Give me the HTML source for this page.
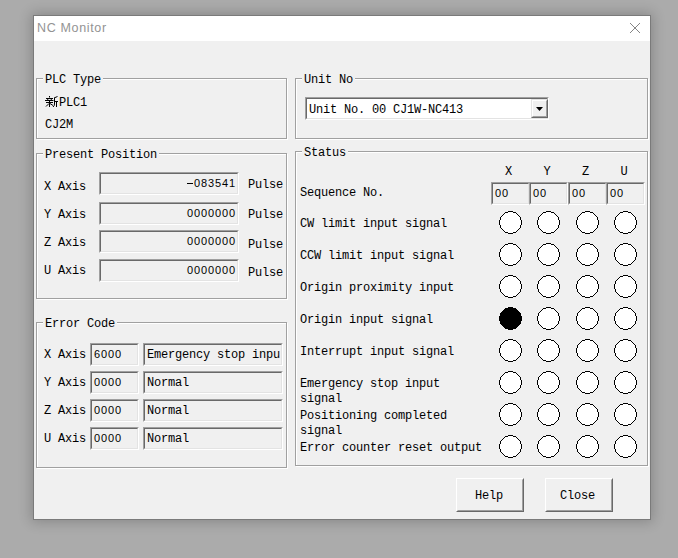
<!DOCTYPE html>
<html><head><meta charset="utf-8">
<style>
html,body{margin:0;padding:0;}
body{width:678px;height:558px;background:#ababab;position:relative;overflow:hidden;font-family:"Liberation Mono",monospace;font-size:12px;letter-spacing:-0.2px;color:#000;}
.abs{position:absolute;}
#win{position:absolute;left:33px;top:15px;width:616px;height:503px;border:1px solid #7a7a7a;background:#f0f0f0;box-shadow:0 0 12px 2px rgba(0,0,0,0.2);}
#title{position:absolute;left:34px;top:16px;width:616px;height:25px;background:#fff;}
.tt{position:absolute;font-family:"Liberation Sans",sans-serif;font-size:12.5px;letter-spacing:0.65px;color:#939393;white-space:nowrap;}
.grp{position:absolute;border:1px solid #a0a0a0;box-shadow:1px 1px 0 #fff, inset 1px 1px 0 #fff;}
.t{position:absolute;white-space:nowrap;line-height:13px;height:13px;}
.gl{position:absolute;white-space:nowrap;line-height:13px;height:13px;background:#f0f0f0;padding:0 2px;}
.ed{position:absolute;box-sizing:border-box;}
.ed{border-style:solid;border-width:1px;border-color:#a0a0a0 #fff #fff #a0a0a0;}
.ed i{position:absolute;left:0;top:0;right:0;bottom:0;border-style:solid;border-width:1px;border-color:#696969 #e3e3e3 #e3e3e3 #696969;}
.d{font-family:'Liberation Sans',sans-serif;font-size:11px;letter-spacing:0.9px;position:relative;top:-1px;}
.circ{position:absolute;box-sizing:border-box;width:23px;height:23px;border:1.5px solid #000;border-radius:50%;background:#fff;}
.circ.on{background:#000;}
.btn{position:absolute;box-sizing:border-box;border-style:solid;border-width:1px;border-color:#fff #696969 #696969 #fff;background:#f0f0f0;}
.btn::after{content:"";position:absolute;left:0;top:0;right:0;bottom:0;border-style:solid;border-width:1px;border-color:#f0f0f0 #a0a0a0 #a0a0a0 #f0f0f0;}
</style></head><body>
<div id="win"></div>
<div id="title"></div>
<div class="tt" style="left:37px;top:21px;">NC Monitor</div>
<svg class="abs" style="left:629px;top:22px" width="12" height="12" viewBox="0 0 12 12"><path d="M1 1 L11 11 M11 1 L1 11" stroke="#858585" stroke-width="1"/></svg>
<div class="grp" style="left:36px;top:78px;width:249px;height:59px;"></div>
<svg class="abs" style="left:45px;top:96px" width="13" height="12" viewBox="0 0 13 12"><g fill="none" stroke="#000" stroke-width="1"><path d="M4.5 0 V1.5 M1 2.5 H8 M2.5 3 L3 4 M6.5 3 L6 4 M0 4.5 H8.5 M1 6.5 H8 M4.5 4.5 V11 M4 7.5 L1 10.5 M5 7.5 L8 9.5 M12.5 0.5 L9 2 M9.5 2 V8 Q9.5 10 8 11 M9.5 5.5 H13 M11.5 5.5 V11"/></g></svg>
<div class="grp" style="left:295px;top:78px;width:351px;height:59px;"></div>
<div class="ed" style="left:305px;top:97px;width:244px;height:23px;background:#fff;"><i></i></div>
<div class="abs" style="left:531px;top:99px;width:17px;height:19px;box-sizing:border-box;border-style:solid;border-width:1px;border-color:#e3e3e3 #696969 #696969 #e3e3e3;background:#f0f0f0;"><div class="abs" style="left:0;top:0;right:0;bottom:0;border-style:solid;border-width:1px;border-color:#fff #a0a0a0 #a0a0a0 #fff;"></div></div>
<svg class="abs" style="left:536px;top:107px" width="7" height="4" viewBox="0 0 7 4"><path d="M0 0 H7 L3.5 4 Z" fill="#000"/></svg>
<div class="grp" style="left:36px;top:153px;width:249px;height:144px;"></div>
<div class="ed" style="left:99px;top:172px;width:140px;height:23px;background:#f0f0f0;"><i></i></div>
<div class="abs" style="left:187px;top:183px;width:6px;height:1px;background:#000"></div>
<div class="ed" style="left:99px;top:202px;width:140px;height:23px;background:#f0f0f0;"><i></i></div>
<div class="ed" style="left:99px;top:230px;width:140px;height:23px;background:#f0f0f0;"><i></i></div>
<div class="ed" style="left:99px;top:259px;width:140px;height:23px;background:#f0f0f0;"><i></i></div>
<div class="grp" style="left:36px;top:322px;width:249px;height:144px;"></div>
<div class="ed" style="left:90px;top:343px;width:49px;height:23px;background:#f0f0f0;"><i></i></div>
<div class="ed" style="left:143px;top:343px;width:140px;height:23px;background:#f0f0f0;"><i></i></div>
<div class="ed" style="left:90px;top:371px;width:49px;height:23px;background:#f0f0f0;"><i></i></div>
<div class="ed" style="left:143px;top:371px;width:140px;height:23px;background:#f0f0f0;"><i></i></div>
<div class="ed" style="left:90px;top:399px;width:49px;height:23px;background:#f0f0f0;"><i></i></div>
<div class="ed" style="left:143px;top:399px;width:140px;height:23px;background:#f0f0f0;"><i></i></div>
<div class="ed" style="left:90px;top:427px;width:49px;height:23px;background:#f0f0f0;"><i></i></div>
<div class="ed" style="left:143px;top:427px;width:140px;height:23px;background:#f0f0f0;"><i></i></div>
<div class="grp" style="left:295px;top:151px;width:351px;height:313px;"></div>
<div class="ed" style="left:491px;top:182px;width:39px;height:23px;background:#f0f0f0;"><i></i></div>
<div class="ed" style="left:529px;top:182px;width:39px;height:23px;background:#f0f0f0;"><i></i></div>
<div class="ed" style="left:568px;top:182px;width:39px;height:23px;background:#f0f0f0;"><i></i></div>
<div class="ed" style="left:606px;top:182px;width:39px;height:23px;background:#f0f0f0;"><i></i></div>
<div class="btn" style="left:456px;top:478px;width:68px;height:34px;"></div>
<div class="btn" style="left:545px;top:478px;width:68px;height:34px;"></div>
<svg class="abs" style="left:0;top:0" width="678" height="558" shape-rendering="crispEdges"><path fill="#fff" d="M508 211h5v1h-5zM505 212h11v1h-11zM504 213h13v1h-13zM503 214h15v1h-15zM502 215h17v1h-17zM501 216h19v1h-19zM500 217h21v1h-21zM500 218h21v1h-21zM500 219h21v1h-21zM499 220h23v1h-23zM499 221h23v1h-23zM499 222h23v1h-23zM499 223h23v1h-23zM499 224h23v1h-23zM500 225h21v1h-21zM500 226h21v1h-21zM500 227h21v1h-21zM501 228h19v1h-19zM502 229h17v1h-17zM503 230h15v1h-15zM504 231h13v1h-13zM505 232h11v1h-11zM508 233h5v1h-5zM546 211h5v1h-5zM543 212h11v1h-11zM542 213h13v1h-13zM541 214h15v1h-15zM540 215h17v1h-17zM539 216h19v1h-19zM538 217h21v1h-21zM538 218h21v1h-21zM538 219h21v1h-21zM537 220h23v1h-23zM537 221h23v1h-23zM537 222h23v1h-23zM537 223h23v1h-23zM537 224h23v1h-23zM538 225h21v1h-21zM538 226h21v1h-21zM538 227h21v1h-21zM539 228h19v1h-19zM540 229h17v1h-17zM541 230h15v1h-15zM542 231h13v1h-13zM543 232h11v1h-11zM546 233h5v1h-5zM585 211h5v1h-5zM582 212h11v1h-11zM581 213h13v1h-13zM580 214h15v1h-15zM579 215h17v1h-17zM578 216h19v1h-19zM577 217h21v1h-21zM577 218h21v1h-21zM577 219h21v1h-21zM576 220h23v1h-23zM576 221h23v1h-23zM576 222h23v1h-23zM576 223h23v1h-23zM576 224h23v1h-23zM577 225h21v1h-21zM577 226h21v1h-21zM577 227h21v1h-21zM578 228h19v1h-19zM579 229h17v1h-17zM580 230h15v1h-15zM581 231h13v1h-13zM582 232h11v1h-11zM585 233h5v1h-5zM623 211h5v1h-5zM620 212h11v1h-11zM619 213h13v1h-13zM618 214h15v1h-15zM617 215h17v1h-17zM616 216h19v1h-19zM615 217h21v1h-21zM615 218h21v1h-21zM615 219h21v1h-21zM614 220h23v1h-23zM614 221h23v1h-23zM614 222h23v1h-23zM614 223h23v1h-23zM614 224h23v1h-23zM615 225h21v1h-21zM615 226h21v1h-21zM615 227h21v1h-21zM616 228h19v1h-19zM617 229h17v1h-17zM618 230h15v1h-15zM619 231h13v1h-13zM620 232h11v1h-11zM623 233h5v1h-5zM508 243h5v1h-5zM505 244h11v1h-11zM504 245h13v1h-13zM503 246h15v1h-15zM502 247h17v1h-17zM501 248h19v1h-19zM500 249h21v1h-21zM500 250h21v1h-21zM500 251h21v1h-21zM499 252h23v1h-23zM499 253h23v1h-23zM499 254h23v1h-23zM499 255h23v1h-23zM499 256h23v1h-23zM500 257h21v1h-21zM500 258h21v1h-21zM500 259h21v1h-21zM501 260h19v1h-19zM502 261h17v1h-17zM503 262h15v1h-15zM504 263h13v1h-13zM505 264h11v1h-11zM508 265h5v1h-5zM546 243h5v1h-5zM543 244h11v1h-11zM542 245h13v1h-13zM541 246h15v1h-15zM540 247h17v1h-17zM539 248h19v1h-19zM538 249h21v1h-21zM538 250h21v1h-21zM538 251h21v1h-21zM537 252h23v1h-23zM537 253h23v1h-23zM537 254h23v1h-23zM537 255h23v1h-23zM537 256h23v1h-23zM538 257h21v1h-21zM538 258h21v1h-21zM538 259h21v1h-21zM539 260h19v1h-19zM540 261h17v1h-17zM541 262h15v1h-15zM542 263h13v1h-13zM543 264h11v1h-11zM546 265h5v1h-5zM585 243h5v1h-5zM582 244h11v1h-11zM581 245h13v1h-13zM580 246h15v1h-15zM579 247h17v1h-17zM578 248h19v1h-19zM577 249h21v1h-21zM577 250h21v1h-21zM577 251h21v1h-21zM576 252h23v1h-23zM576 253h23v1h-23zM576 254h23v1h-23zM576 255h23v1h-23zM576 256h23v1h-23zM577 257h21v1h-21zM577 258h21v1h-21zM577 259h21v1h-21zM578 260h19v1h-19zM579 261h17v1h-17zM580 262h15v1h-15zM581 263h13v1h-13zM582 264h11v1h-11zM585 265h5v1h-5zM623 243h5v1h-5zM620 244h11v1h-11zM619 245h13v1h-13zM618 246h15v1h-15zM617 247h17v1h-17zM616 248h19v1h-19zM615 249h21v1h-21zM615 250h21v1h-21zM615 251h21v1h-21zM614 252h23v1h-23zM614 253h23v1h-23zM614 254h23v1h-23zM614 255h23v1h-23zM614 256h23v1h-23zM615 257h21v1h-21zM615 258h21v1h-21zM615 259h21v1h-21zM616 260h19v1h-19zM617 261h17v1h-17zM618 262h15v1h-15zM619 263h13v1h-13zM620 264h11v1h-11zM623 265h5v1h-5zM508 275h5v1h-5zM505 276h11v1h-11zM504 277h13v1h-13zM503 278h15v1h-15zM502 279h17v1h-17zM501 280h19v1h-19zM500 281h21v1h-21zM500 282h21v1h-21zM500 283h21v1h-21zM499 284h23v1h-23zM499 285h23v1h-23zM499 286h23v1h-23zM499 287h23v1h-23zM499 288h23v1h-23zM500 289h21v1h-21zM500 290h21v1h-21zM500 291h21v1h-21zM501 292h19v1h-19zM502 293h17v1h-17zM503 294h15v1h-15zM504 295h13v1h-13zM505 296h11v1h-11zM508 297h5v1h-5zM546 275h5v1h-5zM543 276h11v1h-11zM542 277h13v1h-13zM541 278h15v1h-15zM540 279h17v1h-17zM539 280h19v1h-19zM538 281h21v1h-21zM538 282h21v1h-21zM538 283h21v1h-21zM537 284h23v1h-23zM537 285h23v1h-23zM537 286h23v1h-23zM537 287h23v1h-23zM537 288h23v1h-23zM538 289h21v1h-21zM538 290h21v1h-21zM538 291h21v1h-21zM539 292h19v1h-19zM540 293h17v1h-17zM541 294h15v1h-15zM542 295h13v1h-13zM543 296h11v1h-11zM546 297h5v1h-5zM585 275h5v1h-5zM582 276h11v1h-11zM581 277h13v1h-13zM580 278h15v1h-15zM579 279h17v1h-17zM578 280h19v1h-19zM577 281h21v1h-21zM577 282h21v1h-21zM577 283h21v1h-21zM576 284h23v1h-23zM576 285h23v1h-23zM576 286h23v1h-23zM576 287h23v1h-23zM576 288h23v1h-23zM577 289h21v1h-21zM577 290h21v1h-21zM577 291h21v1h-21zM578 292h19v1h-19zM579 293h17v1h-17zM580 294h15v1h-15zM581 295h13v1h-13zM582 296h11v1h-11zM585 297h5v1h-5zM623 275h5v1h-5zM620 276h11v1h-11zM619 277h13v1h-13zM618 278h15v1h-15zM617 279h17v1h-17zM616 280h19v1h-19zM615 281h21v1h-21zM615 282h21v1h-21zM615 283h21v1h-21zM614 284h23v1h-23zM614 285h23v1h-23zM614 286h23v1h-23zM614 287h23v1h-23zM614 288h23v1h-23zM615 289h21v1h-21zM615 290h21v1h-21zM615 291h21v1h-21zM616 292h19v1h-19zM617 293h17v1h-17zM618 294h15v1h-15zM619 295h13v1h-13zM620 296h11v1h-11zM623 297h5v1h-5zM546 307h5v1h-5zM543 308h11v1h-11zM542 309h13v1h-13zM541 310h15v1h-15zM540 311h17v1h-17zM539 312h19v1h-19zM538 313h21v1h-21zM538 314h21v1h-21zM538 315h21v1h-21zM537 316h23v1h-23zM537 317h23v1h-23zM537 318h23v1h-23zM537 319h23v1h-23zM537 320h23v1h-23zM538 321h21v1h-21zM538 322h21v1h-21zM538 323h21v1h-21zM539 324h19v1h-19zM540 325h17v1h-17zM541 326h15v1h-15zM542 327h13v1h-13zM543 328h11v1h-11zM546 329h5v1h-5zM585 307h5v1h-5zM582 308h11v1h-11zM581 309h13v1h-13zM580 310h15v1h-15zM579 311h17v1h-17zM578 312h19v1h-19zM577 313h21v1h-21zM577 314h21v1h-21zM577 315h21v1h-21zM576 316h23v1h-23zM576 317h23v1h-23zM576 318h23v1h-23zM576 319h23v1h-23zM576 320h23v1h-23zM577 321h21v1h-21zM577 322h21v1h-21zM577 323h21v1h-21zM578 324h19v1h-19zM579 325h17v1h-17zM580 326h15v1h-15zM581 327h13v1h-13zM582 328h11v1h-11zM585 329h5v1h-5zM623 307h5v1h-5zM620 308h11v1h-11zM619 309h13v1h-13zM618 310h15v1h-15zM617 311h17v1h-17zM616 312h19v1h-19zM615 313h21v1h-21zM615 314h21v1h-21zM615 315h21v1h-21zM614 316h23v1h-23zM614 317h23v1h-23zM614 318h23v1h-23zM614 319h23v1h-23zM614 320h23v1h-23zM615 321h21v1h-21zM615 322h21v1h-21zM615 323h21v1h-21zM616 324h19v1h-19zM617 325h17v1h-17zM618 326h15v1h-15zM619 327h13v1h-13zM620 328h11v1h-11zM623 329h5v1h-5zM508 339h5v1h-5zM505 340h11v1h-11zM504 341h13v1h-13zM503 342h15v1h-15zM502 343h17v1h-17zM501 344h19v1h-19zM500 345h21v1h-21zM500 346h21v1h-21zM500 347h21v1h-21zM499 348h23v1h-23zM499 349h23v1h-23zM499 350h23v1h-23zM499 351h23v1h-23zM499 352h23v1h-23zM500 353h21v1h-21zM500 354h21v1h-21zM500 355h21v1h-21zM501 356h19v1h-19zM502 357h17v1h-17zM503 358h15v1h-15zM504 359h13v1h-13zM505 360h11v1h-11zM508 361h5v1h-5zM546 339h5v1h-5zM543 340h11v1h-11zM542 341h13v1h-13zM541 342h15v1h-15zM540 343h17v1h-17zM539 344h19v1h-19zM538 345h21v1h-21zM538 346h21v1h-21zM538 347h21v1h-21zM537 348h23v1h-23zM537 349h23v1h-23zM537 350h23v1h-23zM537 351h23v1h-23zM537 352h23v1h-23zM538 353h21v1h-21zM538 354h21v1h-21zM538 355h21v1h-21zM539 356h19v1h-19zM540 357h17v1h-17zM541 358h15v1h-15zM542 359h13v1h-13zM543 360h11v1h-11zM546 361h5v1h-5zM585 339h5v1h-5zM582 340h11v1h-11zM581 341h13v1h-13zM580 342h15v1h-15zM579 343h17v1h-17zM578 344h19v1h-19zM577 345h21v1h-21zM577 346h21v1h-21zM577 347h21v1h-21zM576 348h23v1h-23zM576 349h23v1h-23zM576 350h23v1h-23zM576 351h23v1h-23zM576 352h23v1h-23zM577 353h21v1h-21zM577 354h21v1h-21zM577 355h21v1h-21zM578 356h19v1h-19zM579 357h17v1h-17zM580 358h15v1h-15zM581 359h13v1h-13zM582 360h11v1h-11zM585 361h5v1h-5zM623 339h5v1h-5zM620 340h11v1h-11zM619 341h13v1h-13zM618 342h15v1h-15zM617 343h17v1h-17zM616 344h19v1h-19zM615 345h21v1h-21zM615 346h21v1h-21zM615 347h21v1h-21zM614 348h23v1h-23zM614 349h23v1h-23zM614 350h23v1h-23zM614 351h23v1h-23zM614 352h23v1h-23zM615 353h21v1h-21zM615 354h21v1h-21zM615 355h21v1h-21zM616 356h19v1h-19zM617 357h17v1h-17zM618 358h15v1h-15zM619 359h13v1h-13zM620 360h11v1h-11zM623 361h5v1h-5zM508 371h5v1h-5zM505 372h11v1h-11zM504 373h13v1h-13zM503 374h15v1h-15zM502 375h17v1h-17zM501 376h19v1h-19zM500 377h21v1h-21zM500 378h21v1h-21zM500 379h21v1h-21zM499 380h23v1h-23zM499 381h23v1h-23zM499 382h23v1h-23zM499 383h23v1h-23zM499 384h23v1h-23zM500 385h21v1h-21zM500 386h21v1h-21zM500 387h21v1h-21zM501 388h19v1h-19zM502 389h17v1h-17zM503 390h15v1h-15zM504 391h13v1h-13zM505 392h11v1h-11zM508 393h5v1h-5zM546 371h5v1h-5zM543 372h11v1h-11zM542 373h13v1h-13zM541 374h15v1h-15zM540 375h17v1h-17zM539 376h19v1h-19zM538 377h21v1h-21zM538 378h21v1h-21zM538 379h21v1h-21zM537 380h23v1h-23zM537 381h23v1h-23zM537 382h23v1h-23zM537 383h23v1h-23zM537 384h23v1h-23zM538 385h21v1h-21zM538 386h21v1h-21zM538 387h21v1h-21zM539 388h19v1h-19zM540 389h17v1h-17zM541 390h15v1h-15zM542 391h13v1h-13zM543 392h11v1h-11zM546 393h5v1h-5zM585 371h5v1h-5zM582 372h11v1h-11zM581 373h13v1h-13zM580 374h15v1h-15zM579 375h17v1h-17zM578 376h19v1h-19zM577 377h21v1h-21zM577 378h21v1h-21zM577 379h21v1h-21zM576 380h23v1h-23zM576 381h23v1h-23zM576 382h23v1h-23zM576 383h23v1h-23zM576 384h23v1h-23zM577 385h21v1h-21zM577 386h21v1h-21zM577 387h21v1h-21zM578 388h19v1h-19zM579 389h17v1h-17zM580 390h15v1h-15zM581 391h13v1h-13zM582 392h11v1h-11zM585 393h5v1h-5zM623 371h5v1h-5zM620 372h11v1h-11zM619 373h13v1h-13zM618 374h15v1h-15zM617 375h17v1h-17zM616 376h19v1h-19zM615 377h21v1h-21zM615 378h21v1h-21zM615 379h21v1h-21zM614 380h23v1h-23zM614 381h23v1h-23zM614 382h23v1h-23zM614 383h23v1h-23zM614 384h23v1h-23zM615 385h21v1h-21zM615 386h21v1h-21zM615 387h21v1h-21zM616 388h19v1h-19zM617 389h17v1h-17zM618 390h15v1h-15zM619 391h13v1h-13zM620 392h11v1h-11zM623 393h5v1h-5zM508 403h5v1h-5zM505 404h11v1h-11zM504 405h13v1h-13zM503 406h15v1h-15zM502 407h17v1h-17zM501 408h19v1h-19zM500 409h21v1h-21zM500 410h21v1h-21zM500 411h21v1h-21zM499 412h23v1h-23zM499 413h23v1h-23zM499 414h23v1h-23zM499 415h23v1h-23zM499 416h23v1h-23zM500 417h21v1h-21zM500 418h21v1h-21zM500 419h21v1h-21zM501 420h19v1h-19zM502 421h17v1h-17zM503 422h15v1h-15zM504 423h13v1h-13zM505 424h11v1h-11zM508 425h5v1h-5zM546 403h5v1h-5zM543 404h11v1h-11zM542 405h13v1h-13zM541 406h15v1h-15zM540 407h17v1h-17zM539 408h19v1h-19zM538 409h21v1h-21zM538 410h21v1h-21zM538 411h21v1h-21zM537 412h23v1h-23zM537 413h23v1h-23zM537 414h23v1h-23zM537 415h23v1h-23zM537 416h23v1h-23zM538 417h21v1h-21zM538 418h21v1h-21zM538 419h21v1h-21zM539 420h19v1h-19zM540 421h17v1h-17zM541 422h15v1h-15zM542 423h13v1h-13zM543 424h11v1h-11zM546 425h5v1h-5zM585 403h5v1h-5zM582 404h11v1h-11zM581 405h13v1h-13zM580 406h15v1h-15zM579 407h17v1h-17zM578 408h19v1h-19zM577 409h21v1h-21zM577 410h21v1h-21zM577 411h21v1h-21zM576 412h23v1h-23zM576 413h23v1h-23zM576 414h23v1h-23zM576 415h23v1h-23zM576 416h23v1h-23zM577 417h21v1h-21zM577 418h21v1h-21zM577 419h21v1h-21zM578 420h19v1h-19zM579 421h17v1h-17zM580 422h15v1h-15zM581 423h13v1h-13zM582 424h11v1h-11zM585 425h5v1h-5zM623 403h5v1h-5zM620 404h11v1h-11zM619 405h13v1h-13zM618 406h15v1h-15zM617 407h17v1h-17zM616 408h19v1h-19zM615 409h21v1h-21zM615 410h21v1h-21zM615 411h21v1h-21zM614 412h23v1h-23zM614 413h23v1h-23zM614 414h23v1h-23zM614 415h23v1h-23zM614 416h23v1h-23zM615 417h21v1h-21zM615 418h21v1h-21zM615 419h21v1h-21zM616 420h19v1h-19zM617 421h17v1h-17zM618 422h15v1h-15zM619 423h13v1h-13zM620 424h11v1h-11zM623 425h5v1h-5zM508 435h5v1h-5zM505 436h11v1h-11zM504 437h13v1h-13zM503 438h15v1h-15zM502 439h17v1h-17zM501 440h19v1h-19zM500 441h21v1h-21zM500 442h21v1h-21zM500 443h21v1h-21zM499 444h23v1h-23zM499 445h23v1h-23zM499 446h23v1h-23zM499 447h23v1h-23zM499 448h23v1h-23zM500 449h21v1h-21zM500 450h21v1h-21zM500 451h21v1h-21zM501 452h19v1h-19zM502 453h17v1h-17zM503 454h15v1h-15zM504 455h13v1h-13zM505 456h11v1h-11zM508 457h5v1h-5zM546 435h5v1h-5zM543 436h11v1h-11zM542 437h13v1h-13zM541 438h15v1h-15zM540 439h17v1h-17zM539 440h19v1h-19zM538 441h21v1h-21zM538 442h21v1h-21zM538 443h21v1h-21zM537 444h23v1h-23zM537 445h23v1h-23zM537 446h23v1h-23zM537 447h23v1h-23zM537 448h23v1h-23zM538 449h21v1h-21zM538 450h21v1h-21zM538 451h21v1h-21zM539 452h19v1h-19zM540 453h17v1h-17zM541 454h15v1h-15zM542 455h13v1h-13zM543 456h11v1h-11zM546 457h5v1h-5zM585 435h5v1h-5zM582 436h11v1h-11zM581 437h13v1h-13zM580 438h15v1h-15zM579 439h17v1h-17zM578 440h19v1h-19zM577 441h21v1h-21zM577 442h21v1h-21zM577 443h21v1h-21zM576 444h23v1h-23zM576 445h23v1h-23zM576 446h23v1h-23zM576 447h23v1h-23zM576 448h23v1h-23zM577 449h21v1h-21zM577 450h21v1h-21zM577 451h21v1h-21zM578 452h19v1h-19zM579 453h17v1h-17zM580 454h15v1h-15zM581 455h13v1h-13zM582 456h11v1h-11zM585 457h5v1h-5zM623 435h5v1h-5zM620 436h11v1h-11zM619 437h13v1h-13zM618 438h15v1h-15zM617 439h17v1h-17zM616 440h19v1h-19zM615 441h21v1h-21zM615 442h21v1h-21zM615 443h21v1h-21zM614 444h23v1h-23zM614 445h23v1h-23zM614 446h23v1h-23zM614 447h23v1h-23zM614 448h23v1h-23zM615 449h21v1h-21zM615 450h21v1h-21zM615 451h21v1h-21zM616 452h19v1h-19zM617 453h17v1h-17zM618 454h15v1h-15zM619 455h13v1h-13zM620 456h11v1h-11zM623 457h5v1h-5z"/><path fill="#000" d="M499 220h1v1h-1zM499 221h1v1h-1zM499 222h1v1h-1zM499 223h1v1h-1zM499 224h1v1h-1zM500 217h1v1h-1zM500 218h1v1h-1zM500 219h1v1h-1zM500 225h1v1h-1zM500 226h1v1h-1zM500 227h1v1h-1zM501 216h1v1h-1zM501 228h1v1h-1zM502 215h1v1h-1zM502 229h1v1h-1zM503 214h1v1h-1zM503 230h1v1h-1zM504 213h1v1h-1zM504 231h1v1h-1zM505 212h1v1h-1zM505 232h1v1h-1zM506 212h1v1h-1zM506 232h1v1h-1zM507 212h1v1h-1zM507 232h1v1h-1zM508 211h1v1h-1zM508 233h1v1h-1zM509 211h1v1h-1zM509 233h1v1h-1zM510 211h1v1h-1zM510 233h1v1h-1zM511 211h1v1h-1zM511 233h1v1h-1zM512 211h1v1h-1zM512 233h1v1h-1zM513 212h1v1h-1zM513 232h1v1h-1zM514 212h1v1h-1zM514 232h1v1h-1zM515 212h1v1h-1zM515 232h1v1h-1zM516 213h1v1h-1zM516 231h1v1h-1zM517 214h1v1h-1zM517 230h1v1h-1zM518 215h1v1h-1zM518 229h1v1h-1zM519 216h1v1h-1zM519 228h1v1h-1zM520 217h1v1h-1zM520 218h1v1h-1zM520 219h1v1h-1zM520 225h1v1h-1zM520 226h1v1h-1zM520 227h1v1h-1zM521 220h1v1h-1zM521 221h1v1h-1zM521 222h1v1h-1zM521 223h1v1h-1zM521 224h1v1h-1zM537 220h1v1h-1zM537 221h1v1h-1zM537 222h1v1h-1zM537 223h1v1h-1zM537 224h1v1h-1zM538 217h1v1h-1zM538 218h1v1h-1zM538 219h1v1h-1zM538 225h1v1h-1zM538 226h1v1h-1zM538 227h1v1h-1zM539 216h1v1h-1zM539 228h1v1h-1zM540 215h1v1h-1zM540 229h1v1h-1zM541 214h1v1h-1zM541 230h1v1h-1zM542 213h1v1h-1zM542 231h1v1h-1zM543 212h1v1h-1zM543 232h1v1h-1zM544 212h1v1h-1zM544 232h1v1h-1zM545 212h1v1h-1zM545 232h1v1h-1zM546 211h1v1h-1zM546 233h1v1h-1zM547 211h1v1h-1zM547 233h1v1h-1zM548 211h1v1h-1zM548 233h1v1h-1zM549 211h1v1h-1zM549 233h1v1h-1zM550 211h1v1h-1zM550 233h1v1h-1zM551 212h1v1h-1zM551 232h1v1h-1zM552 212h1v1h-1zM552 232h1v1h-1zM553 212h1v1h-1zM553 232h1v1h-1zM554 213h1v1h-1zM554 231h1v1h-1zM555 214h1v1h-1zM555 230h1v1h-1zM556 215h1v1h-1zM556 229h1v1h-1zM557 216h1v1h-1zM557 228h1v1h-1zM558 217h1v1h-1zM558 218h1v1h-1zM558 219h1v1h-1zM558 225h1v1h-1zM558 226h1v1h-1zM558 227h1v1h-1zM559 220h1v1h-1zM559 221h1v1h-1zM559 222h1v1h-1zM559 223h1v1h-1zM559 224h1v1h-1zM576 220h1v1h-1zM576 221h1v1h-1zM576 222h1v1h-1zM576 223h1v1h-1zM576 224h1v1h-1zM577 217h1v1h-1zM577 218h1v1h-1zM577 219h1v1h-1zM577 225h1v1h-1zM577 226h1v1h-1zM577 227h1v1h-1zM578 216h1v1h-1zM578 228h1v1h-1zM579 215h1v1h-1zM579 229h1v1h-1zM580 214h1v1h-1zM580 230h1v1h-1zM581 213h1v1h-1zM581 231h1v1h-1zM582 212h1v1h-1zM582 232h1v1h-1zM583 212h1v1h-1zM583 232h1v1h-1zM584 212h1v1h-1zM584 232h1v1h-1zM585 211h1v1h-1zM585 233h1v1h-1zM586 211h1v1h-1zM586 233h1v1h-1zM587 211h1v1h-1zM587 233h1v1h-1zM588 211h1v1h-1zM588 233h1v1h-1zM589 211h1v1h-1zM589 233h1v1h-1zM590 212h1v1h-1zM590 232h1v1h-1zM591 212h1v1h-1zM591 232h1v1h-1zM592 212h1v1h-1zM592 232h1v1h-1zM593 213h1v1h-1zM593 231h1v1h-1zM594 214h1v1h-1zM594 230h1v1h-1zM595 215h1v1h-1zM595 229h1v1h-1zM596 216h1v1h-1zM596 228h1v1h-1zM597 217h1v1h-1zM597 218h1v1h-1zM597 219h1v1h-1zM597 225h1v1h-1zM597 226h1v1h-1zM597 227h1v1h-1zM598 220h1v1h-1zM598 221h1v1h-1zM598 222h1v1h-1zM598 223h1v1h-1zM598 224h1v1h-1zM614 220h1v1h-1zM614 221h1v1h-1zM614 222h1v1h-1zM614 223h1v1h-1zM614 224h1v1h-1zM615 217h1v1h-1zM615 218h1v1h-1zM615 219h1v1h-1zM615 225h1v1h-1zM615 226h1v1h-1zM615 227h1v1h-1zM616 216h1v1h-1zM616 228h1v1h-1zM617 215h1v1h-1zM617 229h1v1h-1zM618 214h1v1h-1zM618 230h1v1h-1zM619 213h1v1h-1zM619 231h1v1h-1zM620 212h1v1h-1zM620 232h1v1h-1zM621 212h1v1h-1zM621 232h1v1h-1zM622 212h1v1h-1zM622 232h1v1h-1zM623 211h1v1h-1zM623 233h1v1h-1zM624 211h1v1h-1zM624 233h1v1h-1zM625 211h1v1h-1zM625 233h1v1h-1zM626 211h1v1h-1zM626 233h1v1h-1zM627 211h1v1h-1zM627 233h1v1h-1zM628 212h1v1h-1zM628 232h1v1h-1zM629 212h1v1h-1zM629 232h1v1h-1zM630 212h1v1h-1zM630 232h1v1h-1zM631 213h1v1h-1zM631 231h1v1h-1zM632 214h1v1h-1zM632 230h1v1h-1zM633 215h1v1h-1zM633 229h1v1h-1zM634 216h1v1h-1zM634 228h1v1h-1zM635 217h1v1h-1zM635 218h1v1h-1zM635 219h1v1h-1zM635 225h1v1h-1zM635 226h1v1h-1zM635 227h1v1h-1zM636 220h1v1h-1zM636 221h1v1h-1zM636 222h1v1h-1zM636 223h1v1h-1zM636 224h1v1h-1zM499 252h1v1h-1zM499 253h1v1h-1zM499 254h1v1h-1zM499 255h1v1h-1zM499 256h1v1h-1zM500 249h1v1h-1zM500 250h1v1h-1zM500 251h1v1h-1zM500 257h1v1h-1zM500 258h1v1h-1zM500 259h1v1h-1zM501 248h1v1h-1zM501 260h1v1h-1zM502 247h1v1h-1zM502 261h1v1h-1zM503 246h1v1h-1zM503 262h1v1h-1zM504 245h1v1h-1zM504 263h1v1h-1zM505 244h1v1h-1zM505 264h1v1h-1zM506 244h1v1h-1zM506 264h1v1h-1zM507 244h1v1h-1zM507 264h1v1h-1zM508 243h1v1h-1zM508 265h1v1h-1zM509 243h1v1h-1zM509 265h1v1h-1zM510 243h1v1h-1zM510 265h1v1h-1zM511 243h1v1h-1zM511 265h1v1h-1zM512 243h1v1h-1zM512 265h1v1h-1zM513 244h1v1h-1zM513 264h1v1h-1zM514 244h1v1h-1zM514 264h1v1h-1zM515 244h1v1h-1zM515 264h1v1h-1zM516 245h1v1h-1zM516 263h1v1h-1zM517 246h1v1h-1zM517 262h1v1h-1zM518 247h1v1h-1zM518 261h1v1h-1zM519 248h1v1h-1zM519 260h1v1h-1zM520 249h1v1h-1zM520 250h1v1h-1zM520 251h1v1h-1zM520 257h1v1h-1zM520 258h1v1h-1zM520 259h1v1h-1zM521 252h1v1h-1zM521 253h1v1h-1zM521 254h1v1h-1zM521 255h1v1h-1zM521 256h1v1h-1zM537 252h1v1h-1zM537 253h1v1h-1zM537 254h1v1h-1zM537 255h1v1h-1zM537 256h1v1h-1zM538 249h1v1h-1zM538 250h1v1h-1zM538 251h1v1h-1zM538 257h1v1h-1zM538 258h1v1h-1zM538 259h1v1h-1zM539 248h1v1h-1zM539 260h1v1h-1zM540 247h1v1h-1zM540 261h1v1h-1zM541 246h1v1h-1zM541 262h1v1h-1zM542 245h1v1h-1zM542 263h1v1h-1zM543 244h1v1h-1zM543 264h1v1h-1zM544 244h1v1h-1zM544 264h1v1h-1zM545 244h1v1h-1zM545 264h1v1h-1zM546 243h1v1h-1zM546 265h1v1h-1zM547 243h1v1h-1zM547 265h1v1h-1zM548 243h1v1h-1zM548 265h1v1h-1zM549 243h1v1h-1zM549 265h1v1h-1zM550 243h1v1h-1zM550 265h1v1h-1zM551 244h1v1h-1zM551 264h1v1h-1zM552 244h1v1h-1zM552 264h1v1h-1zM553 244h1v1h-1zM553 264h1v1h-1zM554 245h1v1h-1zM554 263h1v1h-1zM555 246h1v1h-1zM555 262h1v1h-1zM556 247h1v1h-1zM556 261h1v1h-1zM557 248h1v1h-1zM557 260h1v1h-1zM558 249h1v1h-1zM558 250h1v1h-1zM558 251h1v1h-1zM558 257h1v1h-1zM558 258h1v1h-1zM558 259h1v1h-1zM559 252h1v1h-1zM559 253h1v1h-1zM559 254h1v1h-1zM559 255h1v1h-1zM559 256h1v1h-1zM576 252h1v1h-1zM576 253h1v1h-1zM576 254h1v1h-1zM576 255h1v1h-1zM576 256h1v1h-1zM577 249h1v1h-1zM577 250h1v1h-1zM577 251h1v1h-1zM577 257h1v1h-1zM577 258h1v1h-1zM577 259h1v1h-1zM578 248h1v1h-1zM578 260h1v1h-1zM579 247h1v1h-1zM579 261h1v1h-1zM580 246h1v1h-1zM580 262h1v1h-1zM581 245h1v1h-1zM581 263h1v1h-1zM582 244h1v1h-1zM582 264h1v1h-1zM583 244h1v1h-1zM583 264h1v1h-1zM584 244h1v1h-1zM584 264h1v1h-1zM585 243h1v1h-1zM585 265h1v1h-1zM586 243h1v1h-1zM586 265h1v1h-1zM587 243h1v1h-1zM587 265h1v1h-1zM588 243h1v1h-1zM588 265h1v1h-1zM589 243h1v1h-1zM589 265h1v1h-1zM590 244h1v1h-1zM590 264h1v1h-1zM591 244h1v1h-1zM591 264h1v1h-1zM592 244h1v1h-1zM592 264h1v1h-1zM593 245h1v1h-1zM593 263h1v1h-1zM594 246h1v1h-1zM594 262h1v1h-1zM595 247h1v1h-1zM595 261h1v1h-1zM596 248h1v1h-1zM596 260h1v1h-1zM597 249h1v1h-1zM597 250h1v1h-1zM597 251h1v1h-1zM597 257h1v1h-1zM597 258h1v1h-1zM597 259h1v1h-1zM598 252h1v1h-1zM598 253h1v1h-1zM598 254h1v1h-1zM598 255h1v1h-1zM598 256h1v1h-1zM614 252h1v1h-1zM614 253h1v1h-1zM614 254h1v1h-1zM614 255h1v1h-1zM614 256h1v1h-1zM615 249h1v1h-1zM615 250h1v1h-1zM615 251h1v1h-1zM615 257h1v1h-1zM615 258h1v1h-1zM615 259h1v1h-1zM616 248h1v1h-1zM616 260h1v1h-1zM617 247h1v1h-1zM617 261h1v1h-1zM618 246h1v1h-1zM618 262h1v1h-1zM619 245h1v1h-1zM619 263h1v1h-1zM620 244h1v1h-1zM620 264h1v1h-1zM621 244h1v1h-1zM621 264h1v1h-1zM622 244h1v1h-1zM622 264h1v1h-1zM623 243h1v1h-1zM623 265h1v1h-1zM624 243h1v1h-1zM624 265h1v1h-1zM625 243h1v1h-1zM625 265h1v1h-1zM626 243h1v1h-1zM626 265h1v1h-1zM627 243h1v1h-1zM627 265h1v1h-1zM628 244h1v1h-1zM628 264h1v1h-1zM629 244h1v1h-1zM629 264h1v1h-1zM630 244h1v1h-1zM630 264h1v1h-1zM631 245h1v1h-1zM631 263h1v1h-1zM632 246h1v1h-1zM632 262h1v1h-1zM633 247h1v1h-1zM633 261h1v1h-1zM634 248h1v1h-1zM634 260h1v1h-1zM635 249h1v1h-1zM635 250h1v1h-1zM635 251h1v1h-1zM635 257h1v1h-1zM635 258h1v1h-1zM635 259h1v1h-1zM636 252h1v1h-1zM636 253h1v1h-1zM636 254h1v1h-1zM636 255h1v1h-1zM636 256h1v1h-1zM499 284h1v1h-1zM499 285h1v1h-1zM499 286h1v1h-1zM499 287h1v1h-1zM499 288h1v1h-1zM500 281h1v1h-1zM500 282h1v1h-1zM500 283h1v1h-1zM500 289h1v1h-1zM500 290h1v1h-1zM500 291h1v1h-1zM501 280h1v1h-1zM501 292h1v1h-1zM502 279h1v1h-1zM502 293h1v1h-1zM503 278h1v1h-1zM503 294h1v1h-1zM504 277h1v1h-1zM504 295h1v1h-1zM505 276h1v1h-1zM505 296h1v1h-1zM506 276h1v1h-1zM506 296h1v1h-1zM507 276h1v1h-1zM507 296h1v1h-1zM508 275h1v1h-1zM508 297h1v1h-1zM509 275h1v1h-1zM509 297h1v1h-1zM510 275h1v1h-1zM510 297h1v1h-1zM511 275h1v1h-1zM511 297h1v1h-1zM512 275h1v1h-1zM512 297h1v1h-1zM513 276h1v1h-1zM513 296h1v1h-1zM514 276h1v1h-1zM514 296h1v1h-1zM515 276h1v1h-1zM515 296h1v1h-1zM516 277h1v1h-1zM516 295h1v1h-1zM517 278h1v1h-1zM517 294h1v1h-1zM518 279h1v1h-1zM518 293h1v1h-1zM519 280h1v1h-1zM519 292h1v1h-1zM520 281h1v1h-1zM520 282h1v1h-1zM520 283h1v1h-1zM520 289h1v1h-1zM520 290h1v1h-1zM520 291h1v1h-1zM521 284h1v1h-1zM521 285h1v1h-1zM521 286h1v1h-1zM521 287h1v1h-1zM521 288h1v1h-1zM537 284h1v1h-1zM537 285h1v1h-1zM537 286h1v1h-1zM537 287h1v1h-1zM537 288h1v1h-1zM538 281h1v1h-1zM538 282h1v1h-1zM538 283h1v1h-1zM538 289h1v1h-1zM538 290h1v1h-1zM538 291h1v1h-1zM539 280h1v1h-1zM539 292h1v1h-1zM540 279h1v1h-1zM540 293h1v1h-1zM541 278h1v1h-1zM541 294h1v1h-1zM542 277h1v1h-1zM542 295h1v1h-1zM543 276h1v1h-1zM543 296h1v1h-1zM544 276h1v1h-1zM544 296h1v1h-1zM545 276h1v1h-1zM545 296h1v1h-1zM546 275h1v1h-1zM546 297h1v1h-1zM547 275h1v1h-1zM547 297h1v1h-1zM548 275h1v1h-1zM548 297h1v1h-1zM549 275h1v1h-1zM549 297h1v1h-1zM550 275h1v1h-1zM550 297h1v1h-1zM551 276h1v1h-1zM551 296h1v1h-1zM552 276h1v1h-1zM552 296h1v1h-1zM553 276h1v1h-1zM553 296h1v1h-1zM554 277h1v1h-1zM554 295h1v1h-1zM555 278h1v1h-1zM555 294h1v1h-1zM556 279h1v1h-1zM556 293h1v1h-1zM557 280h1v1h-1zM557 292h1v1h-1zM558 281h1v1h-1zM558 282h1v1h-1zM558 283h1v1h-1zM558 289h1v1h-1zM558 290h1v1h-1zM558 291h1v1h-1zM559 284h1v1h-1zM559 285h1v1h-1zM559 286h1v1h-1zM559 287h1v1h-1zM559 288h1v1h-1zM576 284h1v1h-1zM576 285h1v1h-1zM576 286h1v1h-1zM576 287h1v1h-1zM576 288h1v1h-1zM577 281h1v1h-1zM577 282h1v1h-1zM577 283h1v1h-1zM577 289h1v1h-1zM577 290h1v1h-1zM577 291h1v1h-1zM578 280h1v1h-1zM578 292h1v1h-1zM579 279h1v1h-1zM579 293h1v1h-1zM580 278h1v1h-1zM580 294h1v1h-1zM581 277h1v1h-1zM581 295h1v1h-1zM582 276h1v1h-1zM582 296h1v1h-1zM583 276h1v1h-1zM583 296h1v1h-1zM584 276h1v1h-1zM584 296h1v1h-1zM585 275h1v1h-1zM585 297h1v1h-1zM586 275h1v1h-1zM586 297h1v1h-1zM587 275h1v1h-1zM587 297h1v1h-1zM588 275h1v1h-1zM588 297h1v1h-1zM589 275h1v1h-1zM589 297h1v1h-1zM590 276h1v1h-1zM590 296h1v1h-1zM591 276h1v1h-1zM591 296h1v1h-1zM592 276h1v1h-1zM592 296h1v1h-1zM593 277h1v1h-1zM593 295h1v1h-1zM594 278h1v1h-1zM594 294h1v1h-1zM595 279h1v1h-1zM595 293h1v1h-1zM596 280h1v1h-1zM596 292h1v1h-1zM597 281h1v1h-1zM597 282h1v1h-1zM597 283h1v1h-1zM597 289h1v1h-1zM597 290h1v1h-1zM597 291h1v1h-1zM598 284h1v1h-1zM598 285h1v1h-1zM598 286h1v1h-1zM598 287h1v1h-1zM598 288h1v1h-1zM614 284h1v1h-1zM614 285h1v1h-1zM614 286h1v1h-1zM614 287h1v1h-1zM614 288h1v1h-1zM615 281h1v1h-1zM615 282h1v1h-1zM615 283h1v1h-1zM615 289h1v1h-1zM615 290h1v1h-1zM615 291h1v1h-1zM616 280h1v1h-1zM616 292h1v1h-1zM617 279h1v1h-1zM617 293h1v1h-1zM618 278h1v1h-1zM618 294h1v1h-1zM619 277h1v1h-1zM619 295h1v1h-1zM620 276h1v1h-1zM620 296h1v1h-1zM621 276h1v1h-1zM621 296h1v1h-1zM622 276h1v1h-1zM622 296h1v1h-1zM623 275h1v1h-1zM623 297h1v1h-1zM624 275h1v1h-1zM624 297h1v1h-1zM625 275h1v1h-1zM625 297h1v1h-1zM626 275h1v1h-1zM626 297h1v1h-1zM627 275h1v1h-1zM627 297h1v1h-1zM628 276h1v1h-1zM628 296h1v1h-1zM629 276h1v1h-1zM629 296h1v1h-1zM630 276h1v1h-1zM630 296h1v1h-1zM631 277h1v1h-1zM631 295h1v1h-1zM632 278h1v1h-1zM632 294h1v1h-1zM633 279h1v1h-1zM633 293h1v1h-1zM634 280h1v1h-1zM634 292h1v1h-1zM635 281h1v1h-1zM635 282h1v1h-1zM635 283h1v1h-1zM635 289h1v1h-1zM635 290h1v1h-1zM635 291h1v1h-1zM636 284h1v1h-1zM636 285h1v1h-1zM636 286h1v1h-1zM636 287h1v1h-1zM636 288h1v1h-1zM537 316h1v1h-1zM537 317h1v1h-1zM537 318h1v1h-1zM537 319h1v1h-1zM537 320h1v1h-1zM538 313h1v1h-1zM538 314h1v1h-1zM538 315h1v1h-1zM538 321h1v1h-1zM538 322h1v1h-1zM538 323h1v1h-1zM539 312h1v1h-1zM539 324h1v1h-1zM540 311h1v1h-1zM540 325h1v1h-1zM541 310h1v1h-1zM541 326h1v1h-1zM542 309h1v1h-1zM542 327h1v1h-1zM543 308h1v1h-1zM543 328h1v1h-1zM544 308h1v1h-1zM544 328h1v1h-1zM545 308h1v1h-1zM545 328h1v1h-1zM546 307h1v1h-1zM546 329h1v1h-1zM547 307h1v1h-1zM547 329h1v1h-1zM548 307h1v1h-1zM548 329h1v1h-1zM549 307h1v1h-1zM549 329h1v1h-1zM550 307h1v1h-1zM550 329h1v1h-1zM551 308h1v1h-1zM551 328h1v1h-1zM552 308h1v1h-1zM552 328h1v1h-1zM553 308h1v1h-1zM553 328h1v1h-1zM554 309h1v1h-1zM554 327h1v1h-1zM555 310h1v1h-1zM555 326h1v1h-1zM556 311h1v1h-1zM556 325h1v1h-1zM557 312h1v1h-1zM557 324h1v1h-1zM558 313h1v1h-1zM558 314h1v1h-1zM558 315h1v1h-1zM558 321h1v1h-1zM558 322h1v1h-1zM558 323h1v1h-1zM559 316h1v1h-1zM559 317h1v1h-1zM559 318h1v1h-1zM559 319h1v1h-1zM559 320h1v1h-1zM576 316h1v1h-1zM576 317h1v1h-1zM576 318h1v1h-1zM576 319h1v1h-1zM576 320h1v1h-1zM577 313h1v1h-1zM577 314h1v1h-1zM577 315h1v1h-1zM577 321h1v1h-1zM577 322h1v1h-1zM577 323h1v1h-1zM578 312h1v1h-1zM578 324h1v1h-1zM579 311h1v1h-1zM579 325h1v1h-1zM580 310h1v1h-1zM580 326h1v1h-1zM581 309h1v1h-1zM581 327h1v1h-1zM582 308h1v1h-1zM582 328h1v1h-1zM583 308h1v1h-1zM583 328h1v1h-1zM584 308h1v1h-1zM584 328h1v1h-1zM585 307h1v1h-1zM585 329h1v1h-1zM586 307h1v1h-1zM586 329h1v1h-1zM587 307h1v1h-1zM587 329h1v1h-1zM588 307h1v1h-1zM588 329h1v1h-1zM589 307h1v1h-1zM589 329h1v1h-1zM590 308h1v1h-1zM590 328h1v1h-1zM591 308h1v1h-1zM591 328h1v1h-1zM592 308h1v1h-1zM592 328h1v1h-1zM593 309h1v1h-1zM593 327h1v1h-1zM594 310h1v1h-1zM594 326h1v1h-1zM595 311h1v1h-1zM595 325h1v1h-1zM596 312h1v1h-1zM596 324h1v1h-1zM597 313h1v1h-1zM597 314h1v1h-1zM597 315h1v1h-1zM597 321h1v1h-1zM597 322h1v1h-1zM597 323h1v1h-1zM598 316h1v1h-1zM598 317h1v1h-1zM598 318h1v1h-1zM598 319h1v1h-1zM598 320h1v1h-1zM614 316h1v1h-1zM614 317h1v1h-1zM614 318h1v1h-1zM614 319h1v1h-1zM614 320h1v1h-1zM615 313h1v1h-1zM615 314h1v1h-1zM615 315h1v1h-1zM615 321h1v1h-1zM615 322h1v1h-1zM615 323h1v1h-1zM616 312h1v1h-1zM616 324h1v1h-1zM617 311h1v1h-1zM617 325h1v1h-1zM618 310h1v1h-1zM618 326h1v1h-1zM619 309h1v1h-1zM619 327h1v1h-1zM620 308h1v1h-1zM620 328h1v1h-1zM621 308h1v1h-1zM621 328h1v1h-1zM622 308h1v1h-1zM622 328h1v1h-1zM623 307h1v1h-1zM623 329h1v1h-1zM624 307h1v1h-1zM624 329h1v1h-1zM625 307h1v1h-1zM625 329h1v1h-1zM626 307h1v1h-1zM626 329h1v1h-1zM627 307h1v1h-1zM627 329h1v1h-1zM628 308h1v1h-1zM628 328h1v1h-1zM629 308h1v1h-1zM629 328h1v1h-1zM630 308h1v1h-1zM630 328h1v1h-1zM631 309h1v1h-1zM631 327h1v1h-1zM632 310h1v1h-1zM632 326h1v1h-1zM633 311h1v1h-1zM633 325h1v1h-1zM634 312h1v1h-1zM634 324h1v1h-1zM635 313h1v1h-1zM635 314h1v1h-1zM635 315h1v1h-1zM635 321h1v1h-1zM635 322h1v1h-1zM635 323h1v1h-1zM636 316h1v1h-1zM636 317h1v1h-1zM636 318h1v1h-1zM636 319h1v1h-1zM636 320h1v1h-1zM499 348h1v1h-1zM499 349h1v1h-1zM499 350h1v1h-1zM499 351h1v1h-1zM499 352h1v1h-1zM500 345h1v1h-1zM500 346h1v1h-1zM500 347h1v1h-1zM500 353h1v1h-1zM500 354h1v1h-1zM500 355h1v1h-1zM501 344h1v1h-1zM501 356h1v1h-1zM502 343h1v1h-1zM502 357h1v1h-1zM503 342h1v1h-1zM503 358h1v1h-1zM504 341h1v1h-1zM504 359h1v1h-1zM505 340h1v1h-1zM505 360h1v1h-1zM506 340h1v1h-1zM506 360h1v1h-1zM507 340h1v1h-1zM507 360h1v1h-1zM508 339h1v1h-1zM508 361h1v1h-1zM509 339h1v1h-1zM509 361h1v1h-1zM510 339h1v1h-1zM510 361h1v1h-1zM511 339h1v1h-1zM511 361h1v1h-1zM512 339h1v1h-1zM512 361h1v1h-1zM513 340h1v1h-1zM513 360h1v1h-1zM514 340h1v1h-1zM514 360h1v1h-1zM515 340h1v1h-1zM515 360h1v1h-1zM516 341h1v1h-1zM516 359h1v1h-1zM517 342h1v1h-1zM517 358h1v1h-1zM518 343h1v1h-1zM518 357h1v1h-1zM519 344h1v1h-1zM519 356h1v1h-1zM520 345h1v1h-1zM520 346h1v1h-1zM520 347h1v1h-1zM520 353h1v1h-1zM520 354h1v1h-1zM520 355h1v1h-1zM521 348h1v1h-1zM521 349h1v1h-1zM521 350h1v1h-1zM521 351h1v1h-1zM521 352h1v1h-1zM537 348h1v1h-1zM537 349h1v1h-1zM537 350h1v1h-1zM537 351h1v1h-1zM537 352h1v1h-1zM538 345h1v1h-1zM538 346h1v1h-1zM538 347h1v1h-1zM538 353h1v1h-1zM538 354h1v1h-1zM538 355h1v1h-1zM539 344h1v1h-1zM539 356h1v1h-1zM540 343h1v1h-1zM540 357h1v1h-1zM541 342h1v1h-1zM541 358h1v1h-1zM542 341h1v1h-1zM542 359h1v1h-1zM543 340h1v1h-1zM543 360h1v1h-1zM544 340h1v1h-1zM544 360h1v1h-1zM545 340h1v1h-1zM545 360h1v1h-1zM546 339h1v1h-1zM546 361h1v1h-1zM547 339h1v1h-1zM547 361h1v1h-1zM548 339h1v1h-1zM548 361h1v1h-1zM549 339h1v1h-1zM549 361h1v1h-1zM550 339h1v1h-1zM550 361h1v1h-1zM551 340h1v1h-1zM551 360h1v1h-1zM552 340h1v1h-1zM552 360h1v1h-1zM553 340h1v1h-1zM553 360h1v1h-1zM554 341h1v1h-1zM554 359h1v1h-1zM555 342h1v1h-1zM555 358h1v1h-1zM556 343h1v1h-1zM556 357h1v1h-1zM557 344h1v1h-1zM557 356h1v1h-1zM558 345h1v1h-1zM558 346h1v1h-1zM558 347h1v1h-1zM558 353h1v1h-1zM558 354h1v1h-1zM558 355h1v1h-1zM559 348h1v1h-1zM559 349h1v1h-1zM559 350h1v1h-1zM559 351h1v1h-1zM559 352h1v1h-1zM576 348h1v1h-1zM576 349h1v1h-1zM576 350h1v1h-1zM576 351h1v1h-1zM576 352h1v1h-1zM577 345h1v1h-1zM577 346h1v1h-1zM577 347h1v1h-1zM577 353h1v1h-1zM577 354h1v1h-1zM577 355h1v1h-1zM578 344h1v1h-1zM578 356h1v1h-1zM579 343h1v1h-1zM579 357h1v1h-1zM580 342h1v1h-1zM580 358h1v1h-1zM581 341h1v1h-1zM581 359h1v1h-1zM582 340h1v1h-1zM582 360h1v1h-1zM583 340h1v1h-1zM583 360h1v1h-1zM584 340h1v1h-1zM584 360h1v1h-1zM585 339h1v1h-1zM585 361h1v1h-1zM586 339h1v1h-1zM586 361h1v1h-1zM587 339h1v1h-1zM587 361h1v1h-1zM588 339h1v1h-1zM588 361h1v1h-1zM589 339h1v1h-1zM589 361h1v1h-1zM590 340h1v1h-1zM590 360h1v1h-1zM591 340h1v1h-1zM591 360h1v1h-1zM592 340h1v1h-1zM592 360h1v1h-1zM593 341h1v1h-1zM593 359h1v1h-1zM594 342h1v1h-1zM594 358h1v1h-1zM595 343h1v1h-1zM595 357h1v1h-1zM596 344h1v1h-1zM596 356h1v1h-1zM597 345h1v1h-1zM597 346h1v1h-1zM597 347h1v1h-1zM597 353h1v1h-1zM597 354h1v1h-1zM597 355h1v1h-1zM598 348h1v1h-1zM598 349h1v1h-1zM598 350h1v1h-1zM598 351h1v1h-1zM598 352h1v1h-1zM614 348h1v1h-1zM614 349h1v1h-1zM614 350h1v1h-1zM614 351h1v1h-1zM614 352h1v1h-1zM615 345h1v1h-1zM615 346h1v1h-1zM615 347h1v1h-1zM615 353h1v1h-1zM615 354h1v1h-1zM615 355h1v1h-1zM616 344h1v1h-1zM616 356h1v1h-1zM617 343h1v1h-1zM617 357h1v1h-1zM618 342h1v1h-1zM618 358h1v1h-1zM619 341h1v1h-1zM619 359h1v1h-1zM620 340h1v1h-1zM620 360h1v1h-1zM621 340h1v1h-1zM621 360h1v1h-1zM622 340h1v1h-1zM622 360h1v1h-1zM623 339h1v1h-1zM623 361h1v1h-1zM624 339h1v1h-1zM624 361h1v1h-1zM625 339h1v1h-1zM625 361h1v1h-1zM626 339h1v1h-1zM626 361h1v1h-1zM627 339h1v1h-1zM627 361h1v1h-1zM628 340h1v1h-1zM628 360h1v1h-1zM629 340h1v1h-1zM629 360h1v1h-1zM630 340h1v1h-1zM630 360h1v1h-1zM631 341h1v1h-1zM631 359h1v1h-1zM632 342h1v1h-1zM632 358h1v1h-1zM633 343h1v1h-1zM633 357h1v1h-1zM634 344h1v1h-1zM634 356h1v1h-1zM635 345h1v1h-1zM635 346h1v1h-1zM635 347h1v1h-1zM635 353h1v1h-1zM635 354h1v1h-1zM635 355h1v1h-1zM636 348h1v1h-1zM636 349h1v1h-1zM636 350h1v1h-1zM636 351h1v1h-1zM636 352h1v1h-1zM499 380h1v1h-1zM499 381h1v1h-1zM499 382h1v1h-1zM499 383h1v1h-1zM499 384h1v1h-1zM500 377h1v1h-1zM500 378h1v1h-1zM500 379h1v1h-1zM500 385h1v1h-1zM500 386h1v1h-1zM500 387h1v1h-1zM501 376h1v1h-1zM501 388h1v1h-1zM502 375h1v1h-1zM502 389h1v1h-1zM503 374h1v1h-1zM503 390h1v1h-1zM504 373h1v1h-1zM504 391h1v1h-1zM505 372h1v1h-1zM505 392h1v1h-1zM506 372h1v1h-1zM506 392h1v1h-1zM507 372h1v1h-1zM507 392h1v1h-1zM508 371h1v1h-1zM508 393h1v1h-1zM509 371h1v1h-1zM509 393h1v1h-1zM510 371h1v1h-1zM510 393h1v1h-1zM511 371h1v1h-1zM511 393h1v1h-1zM512 371h1v1h-1zM512 393h1v1h-1zM513 372h1v1h-1zM513 392h1v1h-1zM514 372h1v1h-1zM514 392h1v1h-1zM515 372h1v1h-1zM515 392h1v1h-1zM516 373h1v1h-1zM516 391h1v1h-1zM517 374h1v1h-1zM517 390h1v1h-1zM518 375h1v1h-1zM518 389h1v1h-1zM519 376h1v1h-1zM519 388h1v1h-1zM520 377h1v1h-1zM520 378h1v1h-1zM520 379h1v1h-1zM520 385h1v1h-1zM520 386h1v1h-1zM520 387h1v1h-1zM521 380h1v1h-1zM521 381h1v1h-1zM521 382h1v1h-1zM521 383h1v1h-1zM521 384h1v1h-1zM537 380h1v1h-1zM537 381h1v1h-1zM537 382h1v1h-1zM537 383h1v1h-1zM537 384h1v1h-1zM538 377h1v1h-1zM538 378h1v1h-1zM538 379h1v1h-1zM538 385h1v1h-1zM538 386h1v1h-1zM538 387h1v1h-1zM539 376h1v1h-1zM539 388h1v1h-1zM540 375h1v1h-1zM540 389h1v1h-1zM541 374h1v1h-1zM541 390h1v1h-1zM542 373h1v1h-1zM542 391h1v1h-1zM543 372h1v1h-1zM543 392h1v1h-1zM544 372h1v1h-1zM544 392h1v1h-1zM545 372h1v1h-1zM545 392h1v1h-1zM546 371h1v1h-1zM546 393h1v1h-1zM547 371h1v1h-1zM547 393h1v1h-1zM548 371h1v1h-1zM548 393h1v1h-1zM549 371h1v1h-1zM549 393h1v1h-1zM550 371h1v1h-1zM550 393h1v1h-1zM551 372h1v1h-1zM551 392h1v1h-1zM552 372h1v1h-1zM552 392h1v1h-1zM553 372h1v1h-1zM553 392h1v1h-1zM554 373h1v1h-1zM554 391h1v1h-1zM555 374h1v1h-1zM555 390h1v1h-1zM556 375h1v1h-1zM556 389h1v1h-1zM557 376h1v1h-1zM557 388h1v1h-1zM558 377h1v1h-1zM558 378h1v1h-1zM558 379h1v1h-1zM558 385h1v1h-1zM558 386h1v1h-1zM558 387h1v1h-1zM559 380h1v1h-1zM559 381h1v1h-1zM559 382h1v1h-1zM559 383h1v1h-1zM559 384h1v1h-1zM576 380h1v1h-1zM576 381h1v1h-1zM576 382h1v1h-1zM576 383h1v1h-1zM576 384h1v1h-1zM577 377h1v1h-1zM577 378h1v1h-1zM577 379h1v1h-1zM577 385h1v1h-1zM577 386h1v1h-1zM577 387h1v1h-1zM578 376h1v1h-1zM578 388h1v1h-1zM579 375h1v1h-1zM579 389h1v1h-1zM580 374h1v1h-1zM580 390h1v1h-1zM581 373h1v1h-1zM581 391h1v1h-1zM582 372h1v1h-1zM582 392h1v1h-1zM583 372h1v1h-1zM583 392h1v1h-1zM584 372h1v1h-1zM584 392h1v1h-1zM585 371h1v1h-1zM585 393h1v1h-1zM586 371h1v1h-1zM586 393h1v1h-1zM587 371h1v1h-1zM587 393h1v1h-1zM588 371h1v1h-1zM588 393h1v1h-1zM589 371h1v1h-1zM589 393h1v1h-1zM590 372h1v1h-1zM590 392h1v1h-1zM591 372h1v1h-1zM591 392h1v1h-1zM592 372h1v1h-1zM592 392h1v1h-1zM593 373h1v1h-1zM593 391h1v1h-1zM594 374h1v1h-1zM594 390h1v1h-1zM595 375h1v1h-1zM595 389h1v1h-1zM596 376h1v1h-1zM596 388h1v1h-1zM597 377h1v1h-1zM597 378h1v1h-1zM597 379h1v1h-1zM597 385h1v1h-1zM597 386h1v1h-1zM597 387h1v1h-1zM598 380h1v1h-1zM598 381h1v1h-1zM598 382h1v1h-1zM598 383h1v1h-1zM598 384h1v1h-1zM614 380h1v1h-1zM614 381h1v1h-1zM614 382h1v1h-1zM614 383h1v1h-1zM614 384h1v1h-1zM615 377h1v1h-1zM615 378h1v1h-1zM615 379h1v1h-1zM615 385h1v1h-1zM615 386h1v1h-1zM615 387h1v1h-1zM616 376h1v1h-1zM616 388h1v1h-1zM617 375h1v1h-1zM617 389h1v1h-1zM618 374h1v1h-1zM618 390h1v1h-1zM619 373h1v1h-1zM619 391h1v1h-1zM620 372h1v1h-1zM620 392h1v1h-1zM621 372h1v1h-1zM621 392h1v1h-1zM622 372h1v1h-1zM622 392h1v1h-1zM623 371h1v1h-1zM623 393h1v1h-1zM624 371h1v1h-1zM624 393h1v1h-1zM625 371h1v1h-1zM625 393h1v1h-1zM626 371h1v1h-1zM626 393h1v1h-1zM627 371h1v1h-1zM627 393h1v1h-1zM628 372h1v1h-1zM628 392h1v1h-1zM629 372h1v1h-1zM629 392h1v1h-1zM630 372h1v1h-1zM630 392h1v1h-1zM631 373h1v1h-1zM631 391h1v1h-1zM632 374h1v1h-1zM632 390h1v1h-1zM633 375h1v1h-1zM633 389h1v1h-1zM634 376h1v1h-1zM634 388h1v1h-1zM635 377h1v1h-1zM635 378h1v1h-1zM635 379h1v1h-1zM635 385h1v1h-1zM635 386h1v1h-1zM635 387h1v1h-1zM636 380h1v1h-1zM636 381h1v1h-1zM636 382h1v1h-1zM636 383h1v1h-1zM636 384h1v1h-1zM499 412h1v1h-1zM499 413h1v1h-1zM499 414h1v1h-1zM499 415h1v1h-1zM499 416h1v1h-1zM500 409h1v1h-1zM500 410h1v1h-1zM500 411h1v1h-1zM500 417h1v1h-1zM500 418h1v1h-1zM500 419h1v1h-1zM501 408h1v1h-1zM501 420h1v1h-1zM502 407h1v1h-1zM502 421h1v1h-1zM503 406h1v1h-1zM503 422h1v1h-1zM504 405h1v1h-1zM504 423h1v1h-1zM505 404h1v1h-1zM505 424h1v1h-1zM506 404h1v1h-1zM506 424h1v1h-1zM507 404h1v1h-1zM507 424h1v1h-1zM508 403h1v1h-1zM508 425h1v1h-1zM509 403h1v1h-1zM509 425h1v1h-1zM510 403h1v1h-1zM510 425h1v1h-1zM511 403h1v1h-1zM511 425h1v1h-1zM512 403h1v1h-1zM512 425h1v1h-1zM513 404h1v1h-1zM513 424h1v1h-1zM514 404h1v1h-1zM514 424h1v1h-1zM515 404h1v1h-1zM515 424h1v1h-1zM516 405h1v1h-1zM516 423h1v1h-1zM517 406h1v1h-1zM517 422h1v1h-1zM518 407h1v1h-1zM518 421h1v1h-1zM519 408h1v1h-1zM519 420h1v1h-1zM520 409h1v1h-1zM520 410h1v1h-1zM520 411h1v1h-1zM520 417h1v1h-1zM520 418h1v1h-1zM520 419h1v1h-1zM521 412h1v1h-1zM521 413h1v1h-1zM521 414h1v1h-1zM521 415h1v1h-1zM521 416h1v1h-1zM537 412h1v1h-1zM537 413h1v1h-1zM537 414h1v1h-1zM537 415h1v1h-1zM537 416h1v1h-1zM538 409h1v1h-1zM538 410h1v1h-1zM538 411h1v1h-1zM538 417h1v1h-1zM538 418h1v1h-1zM538 419h1v1h-1zM539 408h1v1h-1zM539 420h1v1h-1zM540 407h1v1h-1zM540 421h1v1h-1zM541 406h1v1h-1zM541 422h1v1h-1zM542 405h1v1h-1zM542 423h1v1h-1zM543 404h1v1h-1zM543 424h1v1h-1zM544 404h1v1h-1zM544 424h1v1h-1zM545 404h1v1h-1zM545 424h1v1h-1zM546 403h1v1h-1zM546 425h1v1h-1zM547 403h1v1h-1zM547 425h1v1h-1zM548 403h1v1h-1zM548 425h1v1h-1zM549 403h1v1h-1zM549 425h1v1h-1zM550 403h1v1h-1zM550 425h1v1h-1zM551 404h1v1h-1zM551 424h1v1h-1zM552 404h1v1h-1zM552 424h1v1h-1zM553 404h1v1h-1zM553 424h1v1h-1zM554 405h1v1h-1zM554 423h1v1h-1zM555 406h1v1h-1zM555 422h1v1h-1zM556 407h1v1h-1zM556 421h1v1h-1zM557 408h1v1h-1zM557 420h1v1h-1zM558 409h1v1h-1zM558 410h1v1h-1zM558 411h1v1h-1zM558 417h1v1h-1zM558 418h1v1h-1zM558 419h1v1h-1zM559 412h1v1h-1zM559 413h1v1h-1zM559 414h1v1h-1zM559 415h1v1h-1zM559 416h1v1h-1zM576 412h1v1h-1zM576 413h1v1h-1zM576 414h1v1h-1zM576 415h1v1h-1zM576 416h1v1h-1zM577 409h1v1h-1zM577 410h1v1h-1zM577 411h1v1h-1zM577 417h1v1h-1zM577 418h1v1h-1zM577 419h1v1h-1zM578 408h1v1h-1zM578 420h1v1h-1zM579 407h1v1h-1zM579 421h1v1h-1zM580 406h1v1h-1zM580 422h1v1h-1zM581 405h1v1h-1zM581 423h1v1h-1zM582 404h1v1h-1zM582 424h1v1h-1zM583 404h1v1h-1zM583 424h1v1h-1zM584 404h1v1h-1zM584 424h1v1h-1zM585 403h1v1h-1zM585 425h1v1h-1zM586 403h1v1h-1zM586 425h1v1h-1zM587 403h1v1h-1zM587 425h1v1h-1zM588 403h1v1h-1zM588 425h1v1h-1zM589 403h1v1h-1zM589 425h1v1h-1zM590 404h1v1h-1zM590 424h1v1h-1zM591 404h1v1h-1zM591 424h1v1h-1zM592 404h1v1h-1zM592 424h1v1h-1zM593 405h1v1h-1zM593 423h1v1h-1zM594 406h1v1h-1zM594 422h1v1h-1zM595 407h1v1h-1zM595 421h1v1h-1zM596 408h1v1h-1zM596 420h1v1h-1zM597 409h1v1h-1zM597 410h1v1h-1zM597 411h1v1h-1zM597 417h1v1h-1zM597 418h1v1h-1zM597 419h1v1h-1zM598 412h1v1h-1zM598 413h1v1h-1zM598 414h1v1h-1zM598 415h1v1h-1zM598 416h1v1h-1zM614 412h1v1h-1zM614 413h1v1h-1zM614 414h1v1h-1zM614 415h1v1h-1zM614 416h1v1h-1zM615 409h1v1h-1zM615 410h1v1h-1zM615 411h1v1h-1zM615 417h1v1h-1zM615 418h1v1h-1zM615 419h1v1h-1zM616 408h1v1h-1zM616 420h1v1h-1zM617 407h1v1h-1zM617 421h1v1h-1zM618 406h1v1h-1zM618 422h1v1h-1zM619 405h1v1h-1zM619 423h1v1h-1zM620 404h1v1h-1zM620 424h1v1h-1zM621 404h1v1h-1zM621 424h1v1h-1zM622 404h1v1h-1zM622 424h1v1h-1zM623 403h1v1h-1zM623 425h1v1h-1zM624 403h1v1h-1zM624 425h1v1h-1zM625 403h1v1h-1zM625 425h1v1h-1zM626 403h1v1h-1zM626 425h1v1h-1zM627 403h1v1h-1zM627 425h1v1h-1zM628 404h1v1h-1zM628 424h1v1h-1zM629 404h1v1h-1zM629 424h1v1h-1zM630 404h1v1h-1zM630 424h1v1h-1zM631 405h1v1h-1zM631 423h1v1h-1zM632 406h1v1h-1zM632 422h1v1h-1zM633 407h1v1h-1zM633 421h1v1h-1zM634 408h1v1h-1zM634 420h1v1h-1zM635 409h1v1h-1zM635 410h1v1h-1zM635 411h1v1h-1zM635 417h1v1h-1zM635 418h1v1h-1zM635 419h1v1h-1zM636 412h1v1h-1zM636 413h1v1h-1zM636 414h1v1h-1zM636 415h1v1h-1zM636 416h1v1h-1zM499 444h1v1h-1zM499 445h1v1h-1zM499 446h1v1h-1zM499 447h1v1h-1zM499 448h1v1h-1zM500 441h1v1h-1zM500 442h1v1h-1zM500 443h1v1h-1zM500 449h1v1h-1zM500 450h1v1h-1zM500 451h1v1h-1zM501 440h1v1h-1zM501 452h1v1h-1zM502 439h1v1h-1zM502 453h1v1h-1zM503 438h1v1h-1zM503 454h1v1h-1zM504 437h1v1h-1zM504 455h1v1h-1zM505 436h1v1h-1zM505 456h1v1h-1zM506 436h1v1h-1zM506 456h1v1h-1zM507 436h1v1h-1zM507 456h1v1h-1zM508 435h1v1h-1zM508 457h1v1h-1zM509 435h1v1h-1zM509 457h1v1h-1zM510 435h1v1h-1zM510 457h1v1h-1zM511 435h1v1h-1zM511 457h1v1h-1zM512 435h1v1h-1zM512 457h1v1h-1zM513 436h1v1h-1zM513 456h1v1h-1zM514 436h1v1h-1zM514 456h1v1h-1zM515 436h1v1h-1zM515 456h1v1h-1zM516 437h1v1h-1zM516 455h1v1h-1zM517 438h1v1h-1zM517 454h1v1h-1zM518 439h1v1h-1zM518 453h1v1h-1zM519 440h1v1h-1zM519 452h1v1h-1zM520 441h1v1h-1zM520 442h1v1h-1zM520 443h1v1h-1zM520 449h1v1h-1zM520 450h1v1h-1zM520 451h1v1h-1zM521 444h1v1h-1zM521 445h1v1h-1zM521 446h1v1h-1zM521 447h1v1h-1zM521 448h1v1h-1zM537 444h1v1h-1zM537 445h1v1h-1zM537 446h1v1h-1zM537 447h1v1h-1zM537 448h1v1h-1zM538 441h1v1h-1zM538 442h1v1h-1zM538 443h1v1h-1zM538 449h1v1h-1zM538 450h1v1h-1zM538 451h1v1h-1zM539 440h1v1h-1zM539 452h1v1h-1zM540 439h1v1h-1zM540 453h1v1h-1zM541 438h1v1h-1zM541 454h1v1h-1zM542 437h1v1h-1zM542 455h1v1h-1zM543 436h1v1h-1zM543 456h1v1h-1zM544 436h1v1h-1zM544 456h1v1h-1zM545 436h1v1h-1zM545 456h1v1h-1zM546 435h1v1h-1zM546 457h1v1h-1zM547 435h1v1h-1zM547 457h1v1h-1zM548 435h1v1h-1zM548 457h1v1h-1zM549 435h1v1h-1zM549 457h1v1h-1zM550 435h1v1h-1zM550 457h1v1h-1zM551 436h1v1h-1zM551 456h1v1h-1zM552 436h1v1h-1zM552 456h1v1h-1zM553 436h1v1h-1zM553 456h1v1h-1zM554 437h1v1h-1zM554 455h1v1h-1zM555 438h1v1h-1zM555 454h1v1h-1zM556 439h1v1h-1zM556 453h1v1h-1zM557 440h1v1h-1zM557 452h1v1h-1zM558 441h1v1h-1zM558 442h1v1h-1zM558 443h1v1h-1zM558 449h1v1h-1zM558 450h1v1h-1zM558 451h1v1h-1zM559 444h1v1h-1zM559 445h1v1h-1zM559 446h1v1h-1zM559 447h1v1h-1zM559 448h1v1h-1zM576 444h1v1h-1zM576 445h1v1h-1zM576 446h1v1h-1zM576 447h1v1h-1zM576 448h1v1h-1zM577 441h1v1h-1zM577 442h1v1h-1zM577 443h1v1h-1zM577 449h1v1h-1zM577 450h1v1h-1zM577 451h1v1h-1zM578 440h1v1h-1zM578 452h1v1h-1zM579 439h1v1h-1zM579 453h1v1h-1zM580 438h1v1h-1zM580 454h1v1h-1zM581 437h1v1h-1zM581 455h1v1h-1zM582 436h1v1h-1zM582 456h1v1h-1zM583 436h1v1h-1zM583 456h1v1h-1zM584 436h1v1h-1zM584 456h1v1h-1zM585 435h1v1h-1zM585 457h1v1h-1zM586 435h1v1h-1zM586 457h1v1h-1zM587 435h1v1h-1zM587 457h1v1h-1zM588 435h1v1h-1zM588 457h1v1h-1zM589 435h1v1h-1zM589 457h1v1h-1zM590 436h1v1h-1zM590 456h1v1h-1zM591 436h1v1h-1zM591 456h1v1h-1zM592 436h1v1h-1zM592 456h1v1h-1zM593 437h1v1h-1zM593 455h1v1h-1zM594 438h1v1h-1zM594 454h1v1h-1zM595 439h1v1h-1zM595 453h1v1h-1zM596 440h1v1h-1zM596 452h1v1h-1zM597 441h1v1h-1zM597 442h1v1h-1zM597 443h1v1h-1zM597 449h1v1h-1zM597 450h1v1h-1zM597 451h1v1h-1zM598 444h1v1h-1zM598 445h1v1h-1zM598 446h1v1h-1zM598 447h1v1h-1zM598 448h1v1h-1zM614 444h1v1h-1zM614 445h1v1h-1zM614 446h1v1h-1zM614 447h1v1h-1zM614 448h1v1h-1zM615 441h1v1h-1zM615 442h1v1h-1zM615 443h1v1h-1zM615 449h1v1h-1zM615 450h1v1h-1zM615 451h1v1h-1zM616 440h1v1h-1zM616 452h1v1h-1zM617 439h1v1h-1zM617 453h1v1h-1zM618 438h1v1h-1zM618 454h1v1h-1zM619 437h1v1h-1zM619 455h1v1h-1zM620 436h1v1h-1zM620 456h1v1h-1zM621 436h1v1h-1zM621 456h1v1h-1zM622 436h1v1h-1zM622 456h1v1h-1zM623 435h1v1h-1zM623 457h1v1h-1zM624 435h1v1h-1zM624 457h1v1h-1zM625 435h1v1h-1zM625 457h1v1h-1zM626 435h1v1h-1zM626 457h1v1h-1zM627 435h1v1h-1zM627 457h1v1h-1zM628 436h1v1h-1zM628 456h1v1h-1zM629 436h1v1h-1zM629 456h1v1h-1zM630 436h1v1h-1zM630 456h1v1h-1zM631 437h1v1h-1zM631 455h1v1h-1zM632 438h1v1h-1zM632 454h1v1h-1zM633 439h1v1h-1zM633 453h1v1h-1zM634 440h1v1h-1zM634 452h1v1h-1zM635 441h1v1h-1zM635 442h1v1h-1zM635 443h1v1h-1zM635 449h1v1h-1zM635 450h1v1h-1zM635 451h1v1h-1zM636 444h1v1h-1zM636 445h1v1h-1zM636 446h1v1h-1zM636 447h1v1h-1zM636 448h1v1h-1zM508 307h5v1h-5zM505 308h11v1h-11zM504 309h13v1h-13zM503 310h15v1h-15zM502 311h17v1h-17zM501 312h19v1h-19zM500 313h21v1h-21zM500 314h21v1h-21zM500 315h21v1h-21zM499 316h23v1h-23zM499 317h23v1h-23zM499 318h23v1h-23zM499 319h23v1h-23zM499 320h23v1h-23zM500 321h21v1h-21zM500 322h21v1h-21zM500 323h21v1h-21zM501 324h19v1h-19zM502 325h17v1h-17zM503 326h15v1h-15zM504 327h13v1h-13zM505 328h11v1h-11zM508 329h5v1h-5z"/></svg>
<div class="gl" style="left:43px;top:74px;">PLC Type</div>
<div class="t" style="left:59px;top:97px;">PLC1</div>
<div class="t" style="left:45px;top:119px;">CJ2M</div>
<div class="gl" style="left:302px;top:74px;">Unit No</div>
<div class="t" style="left:309px;top:104px;">Unit No. 00 CJ1W-NC413</div>
<div class="gl" style="left:43px;top:149px;">Present Position</div>
<div class="t" style="left:44px;top:181px;">X Axis</div>
<div class="t" style="left:172px;top:178px;width:64px;text-align:right;"><span class="d">083541</span></div>
<div class="t" style="left:248px;top:179px;">Pulse</div>
<div class="t" style="left:44px;top:209px;">Y Axis</div>
<div class="t" style="left:172px;top:208px;width:64px;text-align:right;"><span class="d">0000000</span></div>
<div class="t" style="left:248px;top:209px;">Pulse</div>
<div class="t" style="left:44px;top:237px;">Z Axis</div>
<div class="t" style="left:172px;top:236px;width:64px;text-align:right;"><span class="d">0000000</span></div>
<div class="t" style="left:248px;top:239px;">Pulse</div>
<div class="t" style="left:44px;top:265px;">U Axis</div>
<div class="t" style="left:172px;top:265px;width:64px;text-align:right;"><span class="d">0000000</span></div>
<div class="t" style="left:248px;top:267px;">Pulse</div>
<div class="gl" style="left:43px;top:318px;">Error Code</div>
<div class="t" style="left:44px;top:349px;">X Axis</div>
<div class="t" style="left:94px;top:349px;"><span class="d">6000</span></div>
<div class="t" style="left:147px;top:349px;width:135px;overflow:hidden;">Emergency stop inpu</div>
<div class="t" style="left:44px;top:377px;">Y Axis</div>
<div class="t" style="left:94px;top:377px;"><span class="d">0000</span></div>
<div class="t" style="left:147px;top:377px;width:135px;overflow:hidden;">Normal</div>
<div class="t" style="left:44px;top:405px;">Z Axis</div>
<div class="t" style="left:94px;top:405px;"><span class="d">0000</span></div>
<div class="t" style="left:147px;top:405px;width:135px;overflow:hidden;">Normal</div>
<div class="t" style="left:44px;top:433px;">U Axis</div>
<div class="t" style="left:94px;top:433px;"><span class="d">0000</span></div>
<div class="t" style="left:147px;top:433px;width:135px;overflow:hidden;">Normal</div>
<div class="gl" style="left:302px;top:147px;">Status</div>
<div class="t" style="left:505px;top:166px;">X</div>
<div class="t" style="left:543.5px;top:166px;">Y</div>
<div class="t" style="left:582px;top:166px;">Z</div>
<div class="t" style="left:620.5px;top:166px;">U</div>
<div class="t" style="left:495px;top:188px;"><span class="d">00</span></div>
<div class="t" style="left:533px;top:188px;"><span class="d">00</span></div>
<div class="t" style="left:572px;top:188px;"><span class="d">00</span></div>
<div class="t" style="left:610px;top:188px;"><span class="d">00</span></div>
<div class="t" style="left:300px;top:187px;">Sequence No.</div>
<div class="t" style="left:300px;top:218px;">CW limit input signal</div>
<div class="t" style="left:300px;top:250px;">CCW limit input signal</div>
<div class="t" style="left:300px;top:282px;">Origin proximity input</div>
<div class="t" style="left:300px;top:314px;">Origin input signal</div>
<div class="t" style="left:300px;top:346px;">Interrupt input signal</div>
<div class="t" style="left:300px;top:378px;">Emergency stop input</div>
<div class="t" style="left:300px;top:393px;">signal</div>
<div class="t" style="left:300px;top:410px;">Positioning completed</div>
<div class="t" style="left:300px;top:425px;">signal</div>
<div class="t" style="left:300px;top:442px;">Error counter reset output</div>
<div class="t" style="left:475px;top:490px;">Help</div>
<div class="t" style="left:560px;top:490px;">Close</div>
</body></html>
